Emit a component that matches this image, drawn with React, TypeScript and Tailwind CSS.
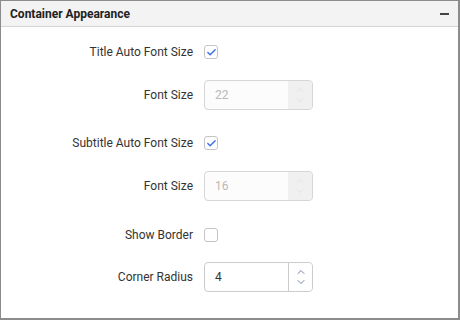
import { Check, ChevronUp, ChevronDown } from "lucide-react";

const font = { fontFamily: "Roboto, 'Liberation Sans', sans-serif" };

const CheckBox = ({ checked }: { checked: boolean }) => (
  <div className="flex h-[14px] w-[14px] items-center justify-center rounded-[3px] border border-[#c4c4c4] bg-white">
    {checked && <Check size={11} strokeWidth={3} className="text-[#3a6ee8]" />}
  </div>
);

const NumberBox = ({ value, disabled }: { value: string; disabled?: boolean }) => (
  <div
    className={`flex h-[30px] w-[109px] rounded-[4px] border ${
      disabled ? "border-[#d6d6d6] bg-[#fcfcfc]" : "border-[#cccccc] bg-white"
    }`}
  >
    <div className={`flex flex-1 items-center pl-[10px] text-[12px] ${disabled ? "text-[#b9b9b9]" : "text-[#333]"}`}>
      {value}
    </div>
    <div
      className={`flex w-[24px] flex-col items-center justify-center rounded-r-[4px] ${
        disabled ? "bg-[#f0f0f0] text-[#dcdcdc]" : "border-l border-[#cccccc] bg-white text-[#4a5f86]"
      }`}
    >
      <ChevronUp size={12} strokeWidth={1.5} className="-mb-[1px]" />
      <ChevronDown size={12} strokeWidth={1.5} className="-mt-[1px]" />
    </div>
  </div>
);

const Row = ({ label, className, children }: { label: string; className?: string; children: React.ReactNode }) => (
  <div className={`flex h-[30px] items-center ${className ?? ""}`}>
    <div className="w-[192px] text-right text-[12px] text-[#333]">{label}</div>
    <div className="ml-[11px]">{children}</div>
  </div>
);

export default function App() {
  return (
    <div style={font} className="h-[320px] w-[460px] overflow-hidden bg-white">
      <div className="h-full w-full border-t border-l border-r-2 border-b-2 border-[#8c8c8c]">
        <div className="flex h-[26px] items-center justify-between border-b border-[#d4d4d4] bg-[#f3f3f3] pl-[9px] pr-[9px]">
          <span className="text-[12px] font-bold text-[#222]">Container Appearance</span>
          <span className="h-[2px] w-[9px] bg-[#444]" />
        </div>
        <div className="pt-[10px]">
          <Row label="Title Auto Font Size">
            <CheckBox checked />
          </Row>
          <Row label="Font Size" className="mt-[13px]">
            <NumberBox value="22" disabled />
          </Row>
          <Row label="Subtitle Auto Font Size" className="mt-[18px]">
            <CheckBox checked />
          </Row>
          <Row label="Font Size" className="mt-[13px]">
            <NumberBox value="16" disabled />
          </Row>
          <Row label="Show Border" className="mt-[19px]">
            <CheckBox checked={false} />
          </Row>
          <Row label="Corner Radius" className="mt-[12px]">
            <NumberBox value="4" />
          </Row>
        </div>
      </div>
    </div>
  );
}
